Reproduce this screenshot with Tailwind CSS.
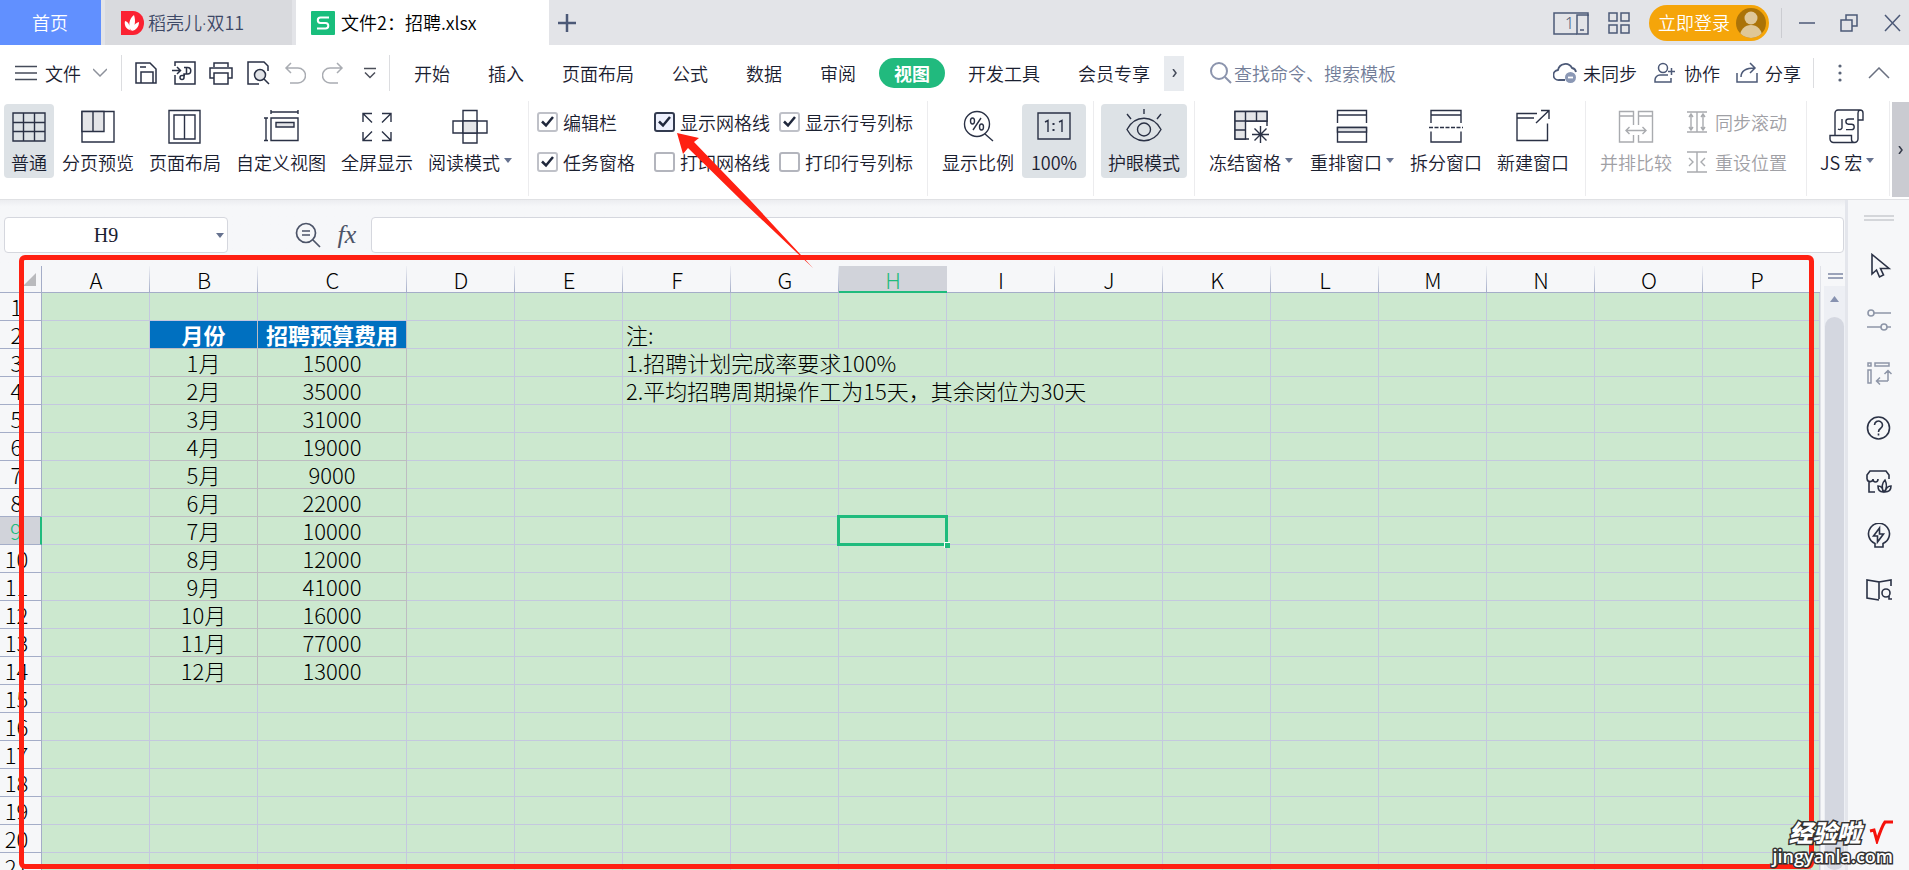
<!DOCTYPE html>
<html lang="zh-CN">
<head>
<meta charset="utf-8">
<title>文件2：招聘.xlsx</title>
<script src="https://cdn.jsdelivr.net/npm/@tailwindcss/browser@4"></script>
</head>
<body class="relative flex h-screen flex-col overflow-hidden bg-[#f6f7f9] font-['Noto_Sans_CJK_SC',sans-serif] text-[18px] font-[350] text-[#1a2030]">

<!-- title bar -->
<header class="flex h-[45px] shrink-0 items-center bg-[#e3e4e8] whitespace-nowrap">
  <button class="h-full w-[101px] bg-[#6190ff] pr-7 pl-[27px] text-white">首页</button>
  <button class="ml-1 flex h-full w-[187px] items-center gap-1 bg-[#d9dade] pl-4 text-[#3d4866]">
    <svg width="23" height="24" viewBox="0 0 23 24"><path d="M0 0h12a11 12 0 0 1 0 24H0z" fill="#fb2232"/><path d="M10 20C7 14 8 8 13 4c2 6 1 12-3 16zM9 19c-4-1-6-5-5-9 4 1 5 5 5 9zM11 20c1-5 3-8 7-9 0 5-3 8-7 9z" fill="#fff"/></svg>
    <span>稻壳儿<span class="font-['Noto_Sans',sans-serif]">·</span>双11</span>
  </button>
  <button class="ml-1 flex h-full w-[253px] items-center gap-1.5 bg-white pl-[15px] text-black">
    <svg width="24" height="24" viewBox="0 0 24 24"><rect width="24" height="24" rx="1" fill="#19be7c"/><path d="M18 6.500H9.500a2.700 2.700 0 0 0 0 5.400h5a2.800 2.800 0 0 1 0 5.600H6" fill="none" stroke="#fff" stroke-width="2"/></svg>
    <span>文件2：招聘.xlsx</span>
  </button>
  <button class="ml-2" aria-label="新建标签"><svg width="20" height="20" viewBox="0 0 20 20"><path d="M10 1v18M1 10h18" stroke="#4c5977" stroke-width="2.500"/></svg></button>
  <div class="ml-auto flex h-full items-center text-[#4c5977]">
    <button aria-label="窗口布局"><svg width="36" height="24" viewBox="0 0 36 24" fill="none" stroke="currentColor" stroke-width="1.500"><path d="M24 23H1V2h34v3"/><rect x="24" y="4" width="11" height="19"/><path d="M27 19h4"/><text x="12" y="18" font-size="16" fill="currentColor" stroke="none" font-family="Noto Sans">1</text></svg></button>
    <button class="ml-[19px]" aria-label="应用"><svg width="22" height="24" viewBox="0 0 22 24" fill="none" stroke="currentColor" stroke-width="1.500"><path d="M1 2h8v8H1zM13 2h8v8h-8zM1 14h8v8H1zM13 14h8v8h-8z"/></svg></button>
    <button class="ml-[19px] flex h-9 items-center gap-1.5 rounded-full bg-[#f5a50a] pr-[3px] pl-[9px] text-white">立即登录
      <svg width="30" height="30" viewBox="0 0 30 30"><clipPath id="av"><circle cx="15" cy="15" r="15"/></clipPath><g clip-path="url(#av)"><path d="M0 0h30v30H0z" fill="#ab7308"/><g fill="#dfc798"><circle cx="15" cy="10" r="6.500"/><ellipse cx="15" cy="28" rx="11" ry="11"/></g></g></svg>
    </button>
    <span class="ml-3 h-[30px] w-px bg-[#cbccd1]"></span>
    <button class="ml-[17px]" aria-label="最小化"><svg width="16" height="18" viewBox="0 0 16 18"><path d="M0 9h16" stroke="currentColor" stroke-width="1.500"/></svg></button>
    <button class="ml-[25px]" aria-label="还原"><svg width="18" height="18" viewBox="0 0 18 18" fill="none" stroke="currentColor" stroke-width="1.500"><path d="M1 6h11v11H1zM6 6V1h11v11h-5"/></svg></button>
    <button class="mr-2 ml-[26px]" aria-label="关闭"><svg width="17" height="18" viewBox="0 0 17 18" stroke="currentColor" stroke-width="1.500"><path d="M1 1l15 16M16 1L1 17"/></svg></button>
  </div>
</header>

<!-- menu row -->
<nav class="flex h-[55px] shrink-0 items-center bg-white pt-px pl-[15px] whitespace-nowrap">
  <button class="flex items-center gap-2"><svg width="22" height="16" viewBox="0 0 22 16" stroke="#454b5a" stroke-width="1.500"><path d="M0 1.500h22M0 8h22M0 14.500h22"/></svg><span>文件</span></button>
  <svg class="ml-3" width="14" height="10" viewBox="0 0 14 10" fill="none" stroke="#8d919b" stroke-width="1.500"><path d="M0 1l7 7 7-7"/></svg>
  <span class="ml-[14px] h-9 w-px bg-[#dcdde0]"></span>
  <div class="ml-[12px] flex items-center text-[#2a3145]">
    <button aria-label="保存"><svg width="24" height="24" viewBox="0 0 24 24" fill="none" stroke="currentColor" stroke-width="1.500"><path d="M2 2h14l6 6v14H2zM7 22V11h12v11M6 6h6"/></svg></button>
    <button class="ml-[14px]" aria-label="输出为PDF"><svg width="24" height="24" viewBox="0 0 24 24" fill="none" stroke="currentColor" stroke-width="1.500"><path d="M3 5V1h20v22H3V14M0 9.500h8M5 6l3.500 3.500L5 13M12 6.500h3.500a3 3 0 0 1 0 6.500H12v3.500a2 2 0 1 1-2-2h3M14.500 7v6"/></svg></button>
    <button class="ml-[13px]" aria-label="打印"><svg width="24" height="24" viewBox="0 0 24 24" fill="none" stroke="currentColor" stroke-width="1.500"><path d="M5 6V2h14v4M5 17H1V7h22v10h-4M5 12h14v11H5z"/></svg></button>
    <button class="ml-[14px]" aria-label="打印预览"><svg width="24" height="24" viewBox="0 0 24 24" fill="none" stroke="currentColor" stroke-width="1.500"><path d="M12 23H1V1h16l4 4v5M17 18l5 5"/><circle cx="13" cy="14" r="5.500" fill="#e1e3e7"/></svg></button>
    <button class="ml-[13px] text-[#a9acb2]" aria-label="撤销"><svg width="22" height="24" viewBox="0 0 22 24" fill="none" stroke="currentColor" stroke-width="1.500"><path d="M7 2L2 7l5 5M2 7h12a7 7 0 0 1 0 15H6"/></svg></button>
    <button class="ml-[16px] text-[#a9acb2]" aria-label="重做"><svg width="22" height="24" viewBox="0 0 22 24" fill="none" stroke="currentColor" stroke-width="1.500"><path d="M15 2l5 5-5 5M20 7H8a7 7 0 0 0 0 15h8"/></svg></button>
    <button class="ml-[20px]" aria-label="自定义快速访问"><svg width="12" height="12" viewBox="0 0 12 12" fill="none" stroke="#4b4f5a" stroke-width="1.500"><path d="M0 1.500h12M1 5.500l5 5 5-5"/></svg></button>
  </div>
  <span class="ml-[13px] h-9 w-px bg-[#dcdde0]"></span>
  <div class="ml-[9px] flex items-center gap-2">
    <button class="px-[15px]">开始</button>
    <button class="px-[15px]">插入</button>
    <button class="px-[15px]">页面布局</button>
    <button class="px-[15px]">公式</button>
    <button class="px-[15px]">数据</button>
    <button class="px-[15px]">审阅</button>
    <button class="h-[30px] rounded-full bg-[#21ba7e] px-[15px] leading-[30px] font-bold text-white">视图</button>
    <button class="px-[15px]">开发工具</button>
    <button class="pr-3.5 pl-[15px]">会员专享</button>
  </div>
  <button class="flex h-[35px] w-5 items-center justify-center bg-[#e8ebef]" aria-label="更多选项卡"><svg width="5" height="8" viewBox="0 0 5 8" fill="none" stroke="#454b5a" stroke-width="1.500"><path d="M1 0l3 4-3 4"/></svg></button>
  <label class="ml-[26px] flex items-center gap-0.5">
    <svg width="22" height="22" viewBox="0 0 22 22" fill="none" stroke="#8b94ad" stroke-width="2"><circle cx="9" cy="9" r="8"/><path d="M15 15l6 6"/></svg>
    <input class="w-[200px] placeholder:text-[#727d98] placeholder:opacity-100" placeholder="查找命令、搜索模板" aria-label="搜索">
  </label>
  <div class="ml-auto flex items-center pr-[19px]">
    <button class="flex items-center gap-1.5"><svg width="24" height="22" viewBox="0 0 24 22" fill="none" stroke="#4c5977" stroke-width="1.800"><path d="M12 18H6a5 5 0 0 1-1-10 7.500 7.500 0 0 1 14-2 5 5 0 0 1 4 4"/><circle cx="17.500" cy="15.500" r="5.500" fill="#8b98b5" stroke="none"/><path d="M15 15.500h5" stroke="#fff"/></svg>未同步</button>
    <button class="ml-[17px] flex items-center gap-2"><svg width="22" height="22" viewBox="0 0 22 22" fill="none" stroke="#4c5977" stroke-width="1.500"><circle cx="9" cy="6" r="4.500"/><path d="M14 13H6a5 5 0 0 0-5 5v2h16v-4M14 9.500h7M17.500 6v7"/></svg>协作</button>
    <button class="ml-4 flex items-center gap-[7px]"><svg width="22" height="22" viewBox="0 0 22 22" fill="none" stroke="#4c5977" stroke-width="1.500"><path d="M1 11v9h20v-9M5 15c0-6 4-9 14-9M14 1l5 5-5 5"/></svg>分享</button>
    <span class="ml-3 h-[30px] w-px bg-[#dcdde0]"></span>
    <button class="ml-6" aria-label="更多"><svg width="4" height="18" viewBox="0 0 4 18" fill="#5a6478"><circle cx="2" cy="2" r="1.600"/><circle cx="2" cy="9" r="1.600"/><circle cx="2" cy="16" r="1.600"/></svg></button>
    <button class="ml-[26px]" aria-label="收起功能区"><svg width="22" height="12" viewBox="0 0 22 12" fill="none" stroke="#6a7080" stroke-width="1.500"><path d="M1 11L11 1l10 10"/></svg></button>
  </div>
</nav>

<!-- ribbon -->
<section class="flex h-[100px] shrink-0 items-start border-b border-[#e0e1e4] bg-white pt-px text-[18px] leading-[26px] whitespace-nowrap">
  <div class="flex h-[95px] w-[529px] shrink-0 items-start gap-px border-r border-[#ececee] pt-[3px] pl-1">
    <button class="flex h-[74px] flex-col items-center gap-1 rounded bg-[#dde2e6] px-[7px] pt-[5px]">
      <svg width="36" height="36" viewBox="0 0 36 36" fill="none" stroke="#2a3145" stroke-width="1.400"><path d="M2 4h32v28H2zM12.500 4v28M23.500 4v28M2 13.500h32M2 22.500h32"/></svg>普通</button>
    <button class="flex h-[74px] flex-col items-center gap-1 px-[7px] pt-[5px]">
      <svg width="36" height="36" viewBox="0 0 36 36" fill="none" stroke="#2a3145" stroke-width="1.400"><path d="M2 2.500h32V33H2z"/><path d="M2 2.500h22v20H2zM13 2.500v20" fill="#e4e5e8"/></svg>分页预览</button>
    <button class="flex h-[74px] flex-col items-center gap-1 px-[7px] pt-[5px]">
      <svg width="36" height="36" viewBox="0 0 36 36" fill="none" stroke="#2a3145" stroke-width="1.400"><path d="M2 1.500h31V34H2zM7 6h21v24H7zM17.500 6v24"/></svg>页面布局</button>
    <button class="flex h-[74px] flex-col items-center gap-1 px-[7px] pt-[5px]">
      <svg width="36" height="36" viewBox="0 0 36 36" fill="none" stroke="#2a3145" stroke-width="1.400"><path d="M8 9h27v22.500H8zM8 3h27M8 1v4M35 1v4M3 9v22.500M1 9h4M1 31.500h4"/><path d="M13 13.500h18V18H13z" fill="#e4e5e8"/></svg>自定义视图</button>
    <button class="flex h-[74px] flex-col items-center gap-1 px-[7px] pt-[5px]">
      <svg width="36" height="36" viewBox="0 0 36 36" fill="none" stroke="#2a3145" stroke-width="1.400"><path d="M4 13V4.500h9M4 4.500L13 13.500M23 4.500h9V13M32 4.500L23 13.500M4 23v8.500h9M4 31.500l9-9M32 23v8.500h-9M32 31.500l-9-9"/></svg>全屏显示</button>
    <button class="flex h-[74px] flex-col items-center gap-1 px-[7px] pt-[5px]">
      <svg width="36" height="36" viewBox="0 0 36 36" fill="none" stroke="#2a3145" stroke-width="1.400"><path d="M1 12h34v12H1z"/><path d="M11 1.500h14V34H11z"/><path d="M11 12h14v12H11z" fill="#e4e5e8"/></svg>
      <span class="flex items-center gap-1">阅读模式<svg class="mb-1" width="8" height="5" viewBox="0 0 8 5" fill="#66728f"><path d="M0 0h8L4 5z"/></svg></span></button>
  </div>

  <div class="grid h-[95px] w-[399px] shrink-0 grid-cols-[117px_125px_auto] content-start gap-y-[14px] border-r border-[#ececee] pt-2 pl-2">
    <label class="flex items-center gap-[5px]"><span class="relative flex"><input type="checkbox" checked class="peer h-5 w-[21px] appearance-none rounded-[3px] border-2 border-[#bfc1c8] bg-white"><svg class="pointer-events-none absolute top-1 left-1 hidden peer-checked:block" width="13" height="12" viewBox="0 0 13 12" fill="none" stroke="#20283c" stroke-width="2.500"><path d="M1 5.500L5 9.500 12 1"/></svg></span>编辑栏</label>
    <label class="flex items-center gap-[5px]"><span class="relative flex"><input type="checkbox" checked class="peer h-5 w-[21px] appearance-none rounded-[3px] border-2 border-[#333b50] bg-[#eef1fd]"><svg class="pointer-events-none absolute top-1 left-1 hidden peer-checked:block" width="13" height="12" viewBox="0 0 13 12" fill="none" stroke="#20283c" stroke-width="2.500"><path d="M1 5.500L5 9.500 12 1"/></svg></span>显示网格线</label>
    <label class="flex items-center gap-[5px]"><span class="relative flex"><input type="checkbox" checked class="peer h-5 w-[21px] appearance-none rounded-[3px] border-2 border-[#bfc1c8] bg-white"><svg class="pointer-events-none absolute top-1 left-1 hidden peer-checked:block" width="13" height="12" viewBox="0 0 13 12" fill="none" stroke="#20283c" stroke-width="2.500"><path d="M1 5.500L5 9.500 12 1"/></svg></span>显示行号列标</label>
    <label class="flex items-center gap-[5px]"><span class="relative flex"><input type="checkbox" checked class="peer h-5 w-[21px] appearance-none rounded-[3px] border-2 border-[#bfc1c8] bg-white"><svg class="pointer-events-none absolute top-1 left-1 hidden peer-checked:block" width="13" height="12" viewBox="0 0 13 12" fill="none" stroke="#20283c" stroke-width="2.500"><path d="M1 5.500L5 9.500 12 1"/></svg></span>任务窗格</label>
    <label class="flex items-center gap-[5px]"><input type="checkbox" class="h-5 w-[21px] appearance-none rounded-[3px] border-2 border-[#b3b5bd] bg-white">打印网格线</label>
    <label class="flex items-center gap-[5px]"><input type="checkbox" class="h-5 w-[21px] appearance-none rounded-[3px] border-2 border-[#b3b5bd] bg-white">打印行号列标</label>
  </div>

  <div class="flex h-[95px] w-[166px] shrink-0 items-start gap-px border-r border-[#ececee] pt-[3px] pl-[7px]">
    <button class="flex h-[74px] flex-col items-center gap-1 px-[7px] pt-[5px]">
      <svg width="36" height="36" viewBox="0 0 36 36" fill="none" stroke="#2a3145" stroke-width="1.400"><circle cx="17" cy="15" r="12.500"/><path d="M25 25l8 7M21 9l-8 12"/><ellipse cx="12.500" cy="12" rx="2" ry="3"/><ellipse cx="21.500" cy="18" rx="2" ry="3"/></svg>显示比例</button>
    <button class="flex h-[74px] w-[64px] flex-col items-center gap-1 rounded bg-[#dde2e6] pt-[5px]">
      <svg width="36" height="36" viewBox="0 0 36 36" fill="none" stroke="#2a3145" stroke-width="1.400"><path d="M2 4h32v26H2zM9 13l3-1.500V23M23 13l3-1.500V23"/><path d="M17.500 14v2M17.500 20v2" stroke-width="2"/></svg>100%</button>
  </div>

  <div class="flex h-[95px] w-[101px] shrink-0 items-start border-r border-[#ececee] pt-[3px] pl-[7px]">
    <button class="flex h-[74px] flex-col items-center gap-1 rounded bg-[#dde2e6] px-[7px] pt-[5px]">
      <svg width="36" height="36" viewBox="0 0 36 36" fill="none" stroke="#2a3145" stroke-width="1.400"><path d="M1 20.500C9 5.500 27 5.500 35 20.500 27 35.500 9 35.500 1 20.500z"/><circle cx="18" cy="20.500" r="6.500"/><path d="M18 0v5M1 5l4 5M35 5l-4 5"/></svg>护眼模式</button>
  </div>

  <div class="flex h-[95px] w-[391px] shrink-0 items-start gap-px border-r border-[#ececee] pt-[3px] pl-[6px]">
    <button class="flex h-[74px] w-[100px] flex-col items-center gap-1 pt-[5px]">
      <svg width="36" height="36" viewBox="0 0 36 36" fill="none" stroke="#2a3145" stroke-width="1.400"><path d="M12.500 12H34V2.500H2V30h14" fill="none"/><path d="M2 2.500h32v9.500H12.500v18H2z" fill="#e4e5e8"/><path d="M34 12v5M12.500 2.500V12M23.500 2.500V12M2 12h11M2 21h10.500M27.500 17v17M19 25.500h17M21.500 19.500l12 12M33.500 19.500l-12 12"/></svg>
      <span class="flex items-center gap-1">冻结窗格<svg class="mb-1" width="8" height="5" viewBox="0 0 8 5" fill="#66728f"><path d="M0 0h8L4 5z"/></svg></span></button>
    <button class="flex h-[74px] w-[100px] flex-col items-center gap-1 pt-[5px]">
      <svg width="36" height="36" viewBox="0 0 36 36" fill="none" stroke="#2a3145" stroke-width="1.400"><path d="M3.500 14V1.500h29V14M3.500 6h29M3.500 18.500h29V33h-29z"/><path d="M3.500 18.500h29V23h-29z" fill="#dfe1e5"/></svg>
      <span class="flex items-center gap-1">重排窗口<svg class="mb-1" width="8" height="5" viewBox="0 0 8 5" fill="#66728f"><path d="M0 0h8L4 5z"/></svg></span></button>
    <button class="flex h-[74px] flex-col items-center gap-1 px-[7px] pt-[5px]">
      <svg width="36" height="36" viewBox="0 0 36 36" fill="none" stroke="#2a3145" stroke-width="1.400"><path d="M3 14V1.500h30V14M3 6h30M3 22.500V33h30V22.500"/><path d="M1 18.500h34" stroke-dasharray="4 1.500"/></svg>拆分窗口</button>
    <button class="flex h-[74px] flex-col items-center gap-1 px-[7px] pt-[5px]">
      <svg width="36" height="36" viewBox="0 0 36 36" fill="none" stroke="#2a3145" stroke-width="1.400"><path d="M22 4.500H2v27h30.500V14.500M2 9h17M21 14L34 1.500M26 1.500h8V10"/></svg>新建窗口</button>
  </div>

  <div class="flex h-[95px] w-[221px] shrink-0 items-start border-r border-[#ececee] pt-[3px] pl-[7px] text-[#9fa0a5]">
    <button class="flex h-[74px] flex-col items-center gap-1 px-[7px] pt-[5px]">
      <svg width="36" height="36" viewBox="0 0 36 36" fill="none" stroke="#a9abaf" stroke-width="1.400"><path d="M15.500 16V2.500h-14V33h14v-7M1.500 7h14M20.500 16V2.500h14V33h-14v-7M20.500 7h14M8 21.500h20M11.500 18L8 21.500l3.500 3.500M24.500 18l3.500 3.500-3.500 3.500"/></svg>并排比较</button>
    <div class="ml-2 flex flex-col gap-[14px] pt-[5px]">
      <button class="flex items-center gap-2"><svg width="20" height="22" viewBox="0 0 20 22" fill="none" stroke="#a9abaf" stroke-width="1.400"><path d="M0 1h20M0 21h20M10 1v20M4 3v16M2 6l2-3 2 3M2 16l2 3 2-3M16 3v16M14 6l2-3 2 3M14 16l2 3 2-3"/></svg>同步滚动</button>
      <button class="flex items-center gap-2"><svg width="20" height="22" viewBox="0 0 20 22" fill="none" stroke="#a9abaf" stroke-width="1.400"><path d="M0 1h20M0 21h20M10 1v20M2 7l4 4-4 4M18 7l-4 4 4 4"/></svg>重设位置</button>
    </div>
  </div>

  <div class="flex h-[95px] w-[83px] shrink-0 items-start border-r border-[#ececee] pt-[3px] pl-[6px]">
    <button class="flex h-[74px] flex-col items-center gap-1 px-[7px] pt-[5px]">
      <svg width="36" height="36" viewBox="0 0 36 36" fill="none" stroke="#2a3145" stroke-width="1.400"><path d="M6 26V4a3 3 0 0 1 3-3h22a3 3 0 0 1 3 3v7h-5V4a3 3 0 0 1 2-3M29 11v19a3.500 3.500 0 0 1-3.500 3.500M6 26.500H1V30a3.500 3.500 0 0 0 3.500 3.500h21a3 3 0 0 1-3-3v-4H6M13 10v9a2.500 2.500 0 0 1-4 1M25 10h-5.500a2.500 2.500 0 0 0 0 5.200h3a2.700 2.700 0 0 1 0 5.400H17"/></svg>
      <span class="flex items-center gap-1">JS 宏<svg class="mb-1" width="8" height="5" viewBox="0 0 8 5" fill="#66728f"><path d="M0 0h8L4 5z"/></svg></span></button>
  </div>
  <button class="mt-px ml-auto flex h-[95px] w-[17px] items-center justify-center bg-[#cacbd1]" aria-label="向右滚动"><svg width="5" height="8" viewBox="0 0 5 8" fill="none" stroke="#353b4a" stroke-width="1.500"><path d="M1 0l3 4-3 4"/></svg></button>
</section>

<div class="flex min-h-0 flex-1">
  <main class="relative flex min-w-0 flex-1 flex-col">
    <!-- formula bar -->
    <div class="flex h-[66px] shrink-0 items-start bg-linear-to-b from-[#ecedf0] from-0% to-[#f6f7f9] to-10% pt-[17px] pr-px pl-1">
      <label class="relative flex w-[224px]">
        <input class="h-9 w-full rounded border border-[#d5d7de] bg-white pr-5 text-center font-['Liberation_Serif',serif] text-[20px]" value="H9" aria-label="名称框">
        <svg class="absolute top-4 right-1" width="8" height="5" viewBox="0 0 8 5" fill="#66728f"><path d="M0 0h8L4 5z"/></svg>
      </label>
      <button class="ml-[67px] pt-[5px]" aria-label="查找"><svg width="26" height="26" viewBox="0 0 26 26" fill="none" stroke="#4c5468" stroke-width="1.700"><circle cx="11" cy="11" r="9.500"/><path d="M18 18l7 7M7 9h8M7 13h8"/></svg></button>
      <button class="ml-3.5 h-9 w-6 font-['Liberation_Serif',serif] text-[26px] leading-9 text-[#4c5468] italic" aria-label="插入函数">fx</button>
      <input class="ml-3 h-9 min-w-0 flex-1 rounded border border-[#d5d7de] bg-white px-2" aria-label="编辑栏">
    </div>

    <!-- sheet -->
    <div class="flex min-h-0 flex-1">
      <div class="min-w-0 flex-1 overflow-hidden">
        <table class="w-full table-fixed border-separate border-spacing-0 text-[22px] leading-[27px] font-light whitespace-nowrap text-black">
          <colgroup id="cols"></colgroup>
          <thead><tr id="letters"></tr></thead>
          <tbody id="rows"></tbody>
        </table>
      </div>
      <div class="flex w-[25px] shrink-0 flex-col items-end border-l border-[#e0e2e8]">
        <div class="flex h-5 w-full items-center justify-center pl-1"><svg width="15" height="6" viewBox="0 0 15 6" stroke="#7d88a4" stroke-width="1.500"><path d="M0 1h15M0 5h15"/></svg></div>
        <div class="flex w-[21px] flex-1 flex-col items-center bg-[#edeff4]">
          <button class="flex h-[31px] items-start pt-2.5" aria-label="向上滚动"><svg width="9" height="6" viewBox="0 0 9 6" fill="#8792b0"><path d="M0 6h9L4.500 0z"/></svg></button>
          <div class="w-[19px] flex-1 rounded-full bg-[#d4d7e0]"></div>
        </div>
      </div>
    </div>

    <div class="pointer-events-none absolute top-[55px] right-[31px] bottom-px left-[19px] rounded-md border-5 border-[#ff2012]"></div>
  </main>

  <!-- side panel -->
  <aside class="flex w-[64px] shrink-0 flex-col items-center border-l-3 border-[#e4e6ec] bg-[#f6f7f9] pt-[15px] text-[#2a3145]">
    <svg width="30" height="6" viewBox="0 0 30 6" stroke="#c9cbd0" stroke-width="1.500"><path d="M0 1h30M0 5h30"/></svg>
    <div class="mt-8 flex flex-col gap-7">
      <button aria-label="选择"><svg width="26" height="26" viewBox="0 0 26 26" fill="none" stroke="currentColor" stroke-width="1.600"><path d="M6 1.500V21l4.500-4 3 7 4-2-3-6.500H23z"/></svg></button>
      <button aria-label="属性"><svg width="26" height="26" viewBox="0 0 26 26" fill="none" stroke="#8e96a8" stroke-width="1.600"><circle cx="5" cy="6" r="3"/><path d="M8 6h17M1 20h14M21 20h4"/><circle cx="18" cy="20" r="3"/></svg></button>
      <button aria-label="分析"><svg width="26" height="26" viewBox="0 0 26 26" fill="none" stroke="#8e96a8" stroke-width="1.500"><path d="M2 2h3v3H2zM9 2h14v3H9zM2 9h3v13H2zM22 20V10M18.500 13l3.500-3.500 3.500 3.500M22 20H11M14 16.500L10.500 20l3.500 3.500"/></svg></button>
      <button aria-label="帮助"><svg width="26" height="26" viewBox="0 0 26 26" fill="none" stroke="currentColor" stroke-width="1.600"><circle cx="12.500" cy="13" r="11"/><path d="M8.500 10a4 4 0 1 1 6 3.500c-1.500 1-2 1.500-2 3.500M12.500 18.500v2"/></svg></button>
      <button aria-label="稻壳资源"><svg width="26" height="26" viewBox="0 0 26 26" fill="none" stroke="currentColor" stroke-width="1.600"><path d="M9 23H3V12M1 10V6l3-4h16l3 4v4M1 10c1 4 6 3 6 0 0 4 5 4 5 0"/><path d="M18 23c-3-4-2-9 1-12 2 4 2 9-1 12zM17 23c-4 0-5-3-5-6 4 0 5 3 5 6zM19 23c1-4 3-6 6-6 0 4-2 6-6 6z"/></svg></button>
      <button aria-label="智能"><svg width="26" height="26" viewBox="0 0 26 26" fill="none" stroke="currentColor" stroke-width="1.600"><path d="M9 24v-3.500a10.500 10.500 0 1 1 8 0V24z"/><path d="M13.500 5l-6 8h4v6l6-8h-4z"/></svg></button>
      <button aria-label="查阅"><svg width="26" height="26" viewBox="0 0 26 26" fill="none" stroke="currentColor" stroke-width="1.600"><path d="M13 22V5L1 3v18l12 2M13 5l12-2v6"/><circle cx="20" cy="16" r="4"/><path d="M23 19v3h3"/></svg></button>
    </div>
  </aside>
</div>

<!-- pointer arrow -->
<svg class="pointer-events-none absolute top-[132px] left-[676px]" width="138" height="137" viewBox="0 0 138 137"><path d="M1 1l22 5-5 4 56 58 63 68L65 68 12 16 7 22z" fill="#ff2012"/></svg>

<!-- watermark -->
<div class="pointer-events-none absolute right-4 bottom-1 flex flex-col items-center font-black text-white">
  <div class="flex items-center gap-2 pl-4 text-[24px] leading-7 italic"><span class="[-webkit-text-stroke:3px_#333] [paint-order:stroke_fill]">经验啦</span><svg width="24" height="24" viewBox="0 0 24 24" fill="none" stroke="#f5120c" stroke-width="3"><path d="M1 11l4-1 3 11c3-9 5-15 8-19h8"/></svg></div>
  <div class="font-['Open_Sans',sans-serif] text-[18px] leading-5 font-semibold [-webkit-text-stroke:3px_#333] [paint-order:stroke_fill]">jingyanla.com</div>
</div>

<script>
const widths = [42, 108, 108, 149].concat(Array(13).fill(108));
const letters = 'ABCDEFGHIJKLMNOP'.split('');
const budget = ['15000','35000','31000','19000','9000','22000','10000','12000','41000','16000','77000','13000'];
document.getElementById('cols').innerHTML = widths.map(w => `<col style="width:${w}px">`).join('') + '<col>';

const head = 'h-[27px] border-b border-[#a4adc8] bg-[linear-gradient(to_bottom,#f0f1f5,#a4adc8)] bg-[length:1px_100%] bg-right bg-no-repeat p-0 leading-6 font-light';
const headOn = 'h-[27px] border-b-2 border-[#1fbb7d] bg-[#d1d3da] p-0 leading-6 font-light text-[#1fbb7d]';
document.getElementById('letters').innerHTML =
  `<th class="h-[27px] border-r border-b border-[#a4adc8] p-0"><svg class="ml-[23px]" width="13" height="13" viewBox="0 0 13 13" fill="#b9babd"><path d="M13 0v13H0z"/></svg></th>` +
  letters.map(l => `<th scope="col" class="${l === 'H' ? headOn : head}">${l}</th>`).join('') +
  '<th class="h-[27px] border-b border-[#a4adc8]"></th>';

const cell = 'h-7 border-r border-b border-[#c4c8df] bg-[#cce8cf] p-0';
const data = 'h-7 border-r border-b border-[#bdbcc2] bg-[#cce8cf] p-0 text-center';
const title = 'h-7 border-r border-b border-[#bdbcc2] bg-[#0070c0] p-0 text-center font-bold text-white';
const note = 'h-7 border-r border-b border-[#c4c8df] bg-[#cce8cf] p-0 pl-[3px] text-left';
const num = 'h-7 border-r border-b border-[#a4adc8] bg-[#f6f7f9] p-0 pr-2 text-center font-light';
const numOn = 'h-7 border-r-2 border-b border-r-[#1fbb7d] border-b-[#a4adc8] bg-[#d1d3da] p-0 pr-2 text-center font-light text-[#1fbb7d]';
const notes = {2: ['注:', 1], 3: ['1.招聘计划完成率要求100%', 3], 4: ['2.平均招聘周期操作工为15天，其余岗位为30天', 5]};
let html = '';
for (let r = 1; r <= 21; r++) {
  html += `<tr><th scope="row" class="${r === 9 ? numOn : num}">${r}</th>`;
  for (let c = 0; c < 17; c++) {
    if (c === 1 && r === 2) html += `<td class="${title}">月份</td>`;
    else if (c === 2 && r === 2) html += `<td class="${title}">招聘预算费用</td>`;
    else if (c === 1 && r > 2 && r < 15) html += `<td class="${data}">${r - 2}月</td>`;
    else if (c === 2 && r > 2 && r < 15) html += `<td class="${data}">${budget[r - 3]}</td>`;
    else if (c === 5 && notes[r]) { html += `<td colspan="${notes[r][1]}" class="${note}">${notes[r][0]}</td>`; c += notes[r][1] - 1; }
    else if (c === 7 && r === 9) html += `<td class="relative h-7 border-r border-b border-[#c4c8df] bg-[#cce8cf] p-0"><div class="absolute -top-0.5 -right-0.5 -bottom-0.5 -left-0.5 z-10 border-3 border-[#1fbb7d]"></div><div class="absolute -right-1 -bottom-1 z-10 size-1.5 border-t border-l border-white bg-[#1fbb7d]"></div></td>`;
    else html += `<td class="${cell}"></td>`;
  }
  html += '</tr>';
}
document.getElementById('rows').innerHTML = html;
</script>
</body>
</html>
